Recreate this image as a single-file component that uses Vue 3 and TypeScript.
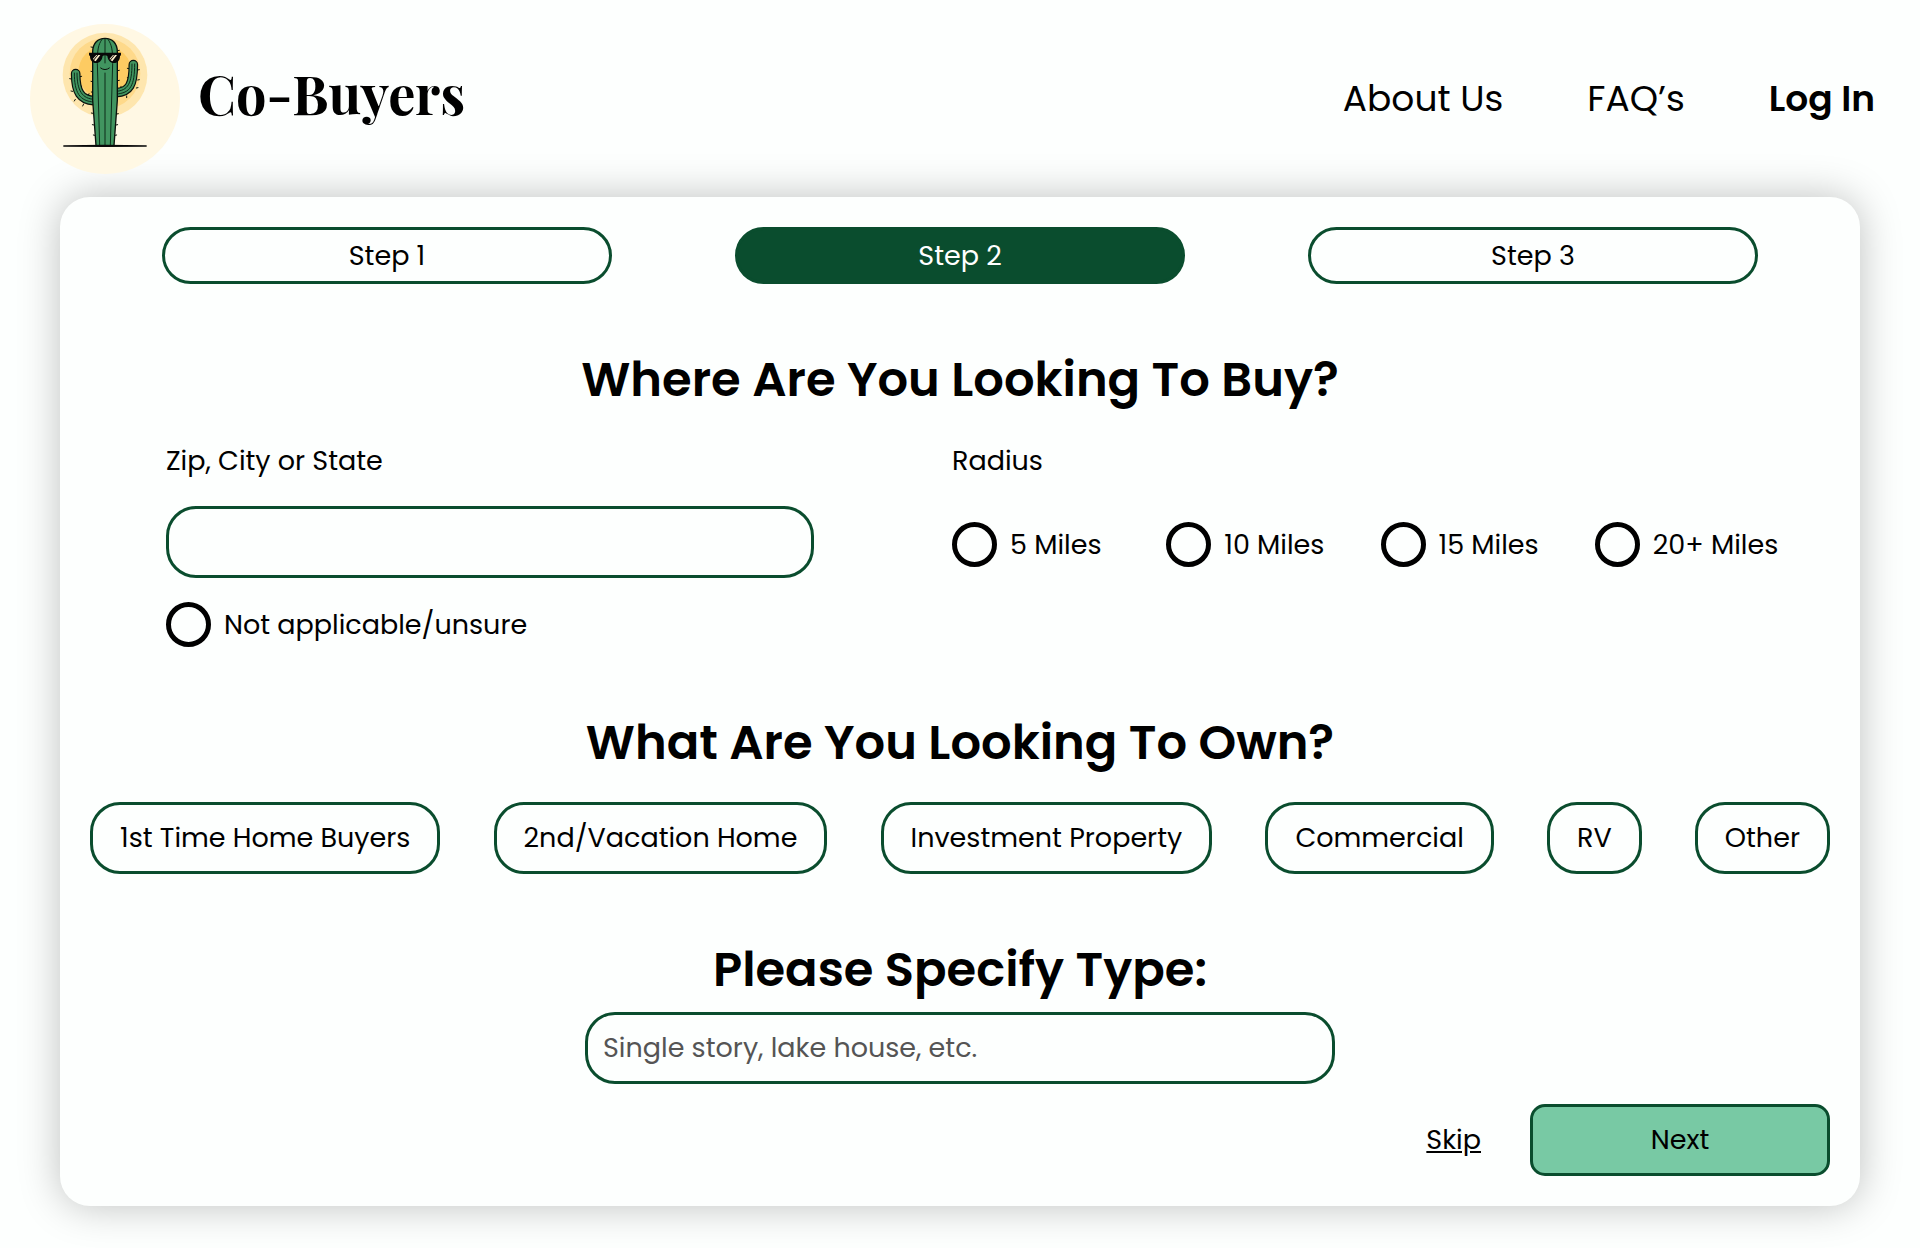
<script setup lang="ts">
import { ref } from 'vue'

interface Step {
  id: number
  label: string
}

const steps: Step[] = [
  { id: 1, label: 'Step 1' },
  { id: 2, label: 'Step 2' },
  { id: 3, label: 'Step 3' },
]
const currentStep = ref<number>(2)

const radiusOptions: string[] = ['5 Miles', '10 Miles', '15 Miles', '20+ Miles']
const radius = ref<string>('')
const location = ref<string>('')
const unsure = ref<string>('')

const propertyTypes: string[] = [
  '1st Time Home Buyers',
  '2nd/Vacation Home',
  'Investment Property',
  'Commercial',
  'RV',
  'Other',
]
const selectedType = ref<string>('')
const details = ref<string>('')

// Spines along the trunk and arms: x, y and the direction they point in.
const spines: [number, number, number][] = [
  [218, 112, -1], [218, 185, -1], [218, 215, -1], [219, 247, -1], [219, 310, -1],
  [222, 345, -1], [225, 376, -1], [293, 122, 1], [293, 182, 1], [293, 212, 1],
  [290, 312, 1], [288, 345, 1], [285, 376, 1], [154, 207, -1], [180, 200, 1],
  [180, 230, 1], [158, 244, -1], [327, 176, -1], [327, 204, -1], [327, 226, -1],
  [353, 180, 1], [353, 210, 1], [349, 234, 1],
]
</script>

<template>
  <div class="page">
    <header class="header">
      <a class="brand" href="#">
        <svg class="logo" viewBox="30 42 450 450" aria-hidden="true">
          <circle cx="255" cy="267" r="225" fill="#fff8e4" />
          <circle cx="255" cy="195" r="127" fill="#fee6ae" />
          <circle cx="255" cy="190" r="106" fill="#fed98a" />
          <circle cx="255" cy="187" r="80" fill="#fdcb62" />
          <g stroke="#10180f" stroke-width="3" stroke-linecap="round">
            <line v-for="([x, y, d], i) in spines" :key="i" :x1="x" :y1="y" :x2="x + d * 5" :y2="y - 1" />
            <path d="M166 268l-3 5M191 282l-3 6M181 251l5-4M205 256l2-5M320 258v5M303 234v-5" />
          </g>
          <g fill="none" stroke-linecap="round">
            <path d="M222 272C182 270 167 246 167 191" stroke="#0b120c" stroke-width="29" />
            <path d="M222 272C182 270 167 246 167 191" stroke="#419560" stroke-width="22" />
            <path d="M222 268C187 266 171 243 171 189M222 276C178 274 163 247 163 189" stroke="#0e2b19" stroke-width="3" />
            <path d="M288 248C328 246 340 224 340 164" stroke="#0b120c" stroke-width="29" />
            <path d="M288 248C328 246 340 224 340 164" stroke="#419560" stroke-width="22" />
            <path d="M288 244C324 242 336 220 336 162M288 252C332 250 344 226 344 162" stroke="#0e2b19" stroke-width="3" />
          </g>
          <path d="M218 126C218 99 234 85 255 85s37 14 37 41v144L282 407H228L218 270z" fill="#419560" stroke="#0b120c" stroke-width="4" />
          <g fill="none" stroke="#0e2b19" stroke-width="3">
            <path d="M255 86v320M246 88C235 104 232 118 232 160L239 406M264 88C275 104 278 118 278 160L271 406" />
          </g>
          <path d="M241 160h28v28h-28z" fill="#419560" />
          <path d="M242 174Q255 184 268 174" fill="none" stroke="#0b120c" stroke-width="3" stroke-linecap="round" />
          <path d="M207 128H303V136L300 138C300 151 293 159 282 159C270 159 264 151 262 138Q255 134 248 138C246 151 240 159 228 159C217 159 210 151 210 138L207 136z" fill="#080808" />
          <path d="M222 151L235 135H241L227 154zM219 146L229 135H232L220 149zM272 151L285 135H291L277 154zM269 146L279 135H282L270 149z" fill="#fdeecb" />
          <path d="M131 406L255 404L379 406Q383 408 379 410L255 411L131 410Q127 408 131 406z" fill="#080808" />
        </svg>
        <span class="brand-name">Co-Buyers</span>
      </a>
      <nav class="nav" aria-label="Main">
        <a href="#">About Us</a>
        <a href="#">FAQ’s</a>
        <a class="login" href="#">Log In</a>
      </nav>
    </header>

    <main class="card">
      <div class="steps">
        <button
          v-for="step in steps"
          :key="step.id"
          type="button"
          class="step"
          :class="{ active: step.id === currentStep }"
          @click="currentStep = step.id"
        >
          {{ step.label }}
        </button>
      </div>

      <h2>Where Are You Looking To Buy?</h2>
      <div class="where">
        <div class="location">
          <label class="caption" for="location">Zip, City or State</label>
          <input id="location" v-model="location" class="field" type="text" />
          <label class="option">
            <input v-model="unsure" type="radio" name="unsure" value="unsure" />
            <span>Not applicable/unsure</span>
          </label>
        </div>
        <div role="radiogroup" aria-labelledby="radius-caption">
          <div id="radius-caption" class="caption">Radius</div>
          <div class="radius-options">
            <label v-for="option in radiusOptions" :key="option" class="option">
              <input v-model="radius" type="radio" name="radius" :value="option" />
              <span>{{ option }}</span>
            </label>
          </div>
        </div>
      </div>

      <h2>What Are You Looking To Own?</h2>
      <div class="types">
        <button
          v-for="type in propertyTypes"
          :key="type"
          type="button"
          class="type"
          :class="{ active: type === selectedType }"
          @click="selectedType = type"
        >
          {{ type }}
        </button>
      </div>

      <h2><label for="details">Please Specify Type:</label></h2>
      <input id="details" v-model="details" class="field details" type="text" placeholder="Single story, lake house, etc." />

      <div class="actions">
        <a href="#">Skip</a>
        <button type="button" class="next">Next</button>
      </div>
    </main>
  </div>
</template>

<style>
body {
  background: #fdfffe;
}
</style>

<style scoped>
.page {
  padding-bottom: 42px;
  color: #000;
  font-family: Poppins, Inter, "Liberation Sans", sans-serif;
  font-size: 27px;
  line-height: 40px;
}

.page *,
.page {
  box-sizing: border-box;
}

a {
  color: inherit;
}

button,
input {
  color: inherit;
  font: inherit;
}

button {
  cursor: pointer;
}

.header {
  display: flex;
  align-items: center;
  justify-content: space-between;
  padding: 24px 45px 23px 30px;
}

.brand {
  display: flex;
  align-items: center;
  gap: 18px;
  text-decoration: none;
}

.logo {
  width: 150px;
  height: 150px;
}

.brand-name {
  padding-bottom: 12px;
  font-family: "Playfair Display", "Liberation Serif", serif;
  font-size: 54px;
  font-weight: 700;
  line-height: 64px;
}

.nav {
  display: flex;
  gap: 84px;
  font-size: 36px;
}

.nav a {
  text-decoration: none;
}

.nav .login {
  font-weight: 600;
}

.card {
  margin: 0 60px;
  padding: 30px;
  border-radius: 30px;
  background: #fdfffe;
  box-shadow: 0 0 40px rgba(0, 0, 0, 0.25);
}

.steps {
  display: flex;
  justify-content: space-between;
  gap: 24px;
  padding: 0 72px;
}

.step {
  width: 450px;
  height: 57px;
  border: 3px solid #0a4d2e;
  border-radius: 29px;
  background: transparent;
}

.step.active {
  background: #0a4d2e;
  color: #fff;
}

h2 {
  margin: 66px 0 0;
  font-size: 48px;
  font-weight: 600;
  line-height: 60px;
  text-align: center;
}

.where {
  display: grid;
  grid-template-columns: 648fr 857fr;
  gap: 138px;
  padding: 31px 21px 0 76px;
}

.caption {
  display: block;
}

.field {
  display: block;
  width: 100%;
  height: 72px;
  padding: 0 15px;
  border: 3px solid #0a4d2e;
  border-radius: 30px;
  background: transparent;
}

.field::placeholder {
  color: #555;
  opacity: 1;
}

.location .field {
  margin: 25px 0 24px;
}

.option {
  display: flex;
  align-items: center;
  gap: 13px;
  white-space: nowrap;
}

.option input {
  flex: none;
  width: 45px;
  height: 45px;
  margin: 0;
  border: 5px solid #000;
  border-radius: 50%;
  appearance: none;
}

.option input:checked {
  background: radial-gradient(circle, #0a4d2e 50%, transparent 54%);
}

.radius-options {
  display: grid;
  grid-template-columns: repeat(4, 1fr);
  padding-top: 41px;
}

.types {
  display: flex;
  justify-content: space-between;
  margin-top: 29px;
}

.type {
  height: 72px;
  padding: 0 27px;
  border: 3px solid #0a4d2e;
  border-radius: 30px;
  background: transparent;
  white-space: nowrap;
}

.type.active {
  background: #78c9a4;
}

.details {
  width: 750px;
  max-width: 100%;
  margin: 12px auto 0;
}

.actions {
  display: flex;
  align-items: center;
  justify-content: flex-end;
  gap: 49px;
  margin-top: 20px;
}

.next {
  width: 300px;
  height: 72px;
  border: 3px solid #0a4d2e;
  border-radius: 15px;
  background: #78c9a4;
}
</style>
